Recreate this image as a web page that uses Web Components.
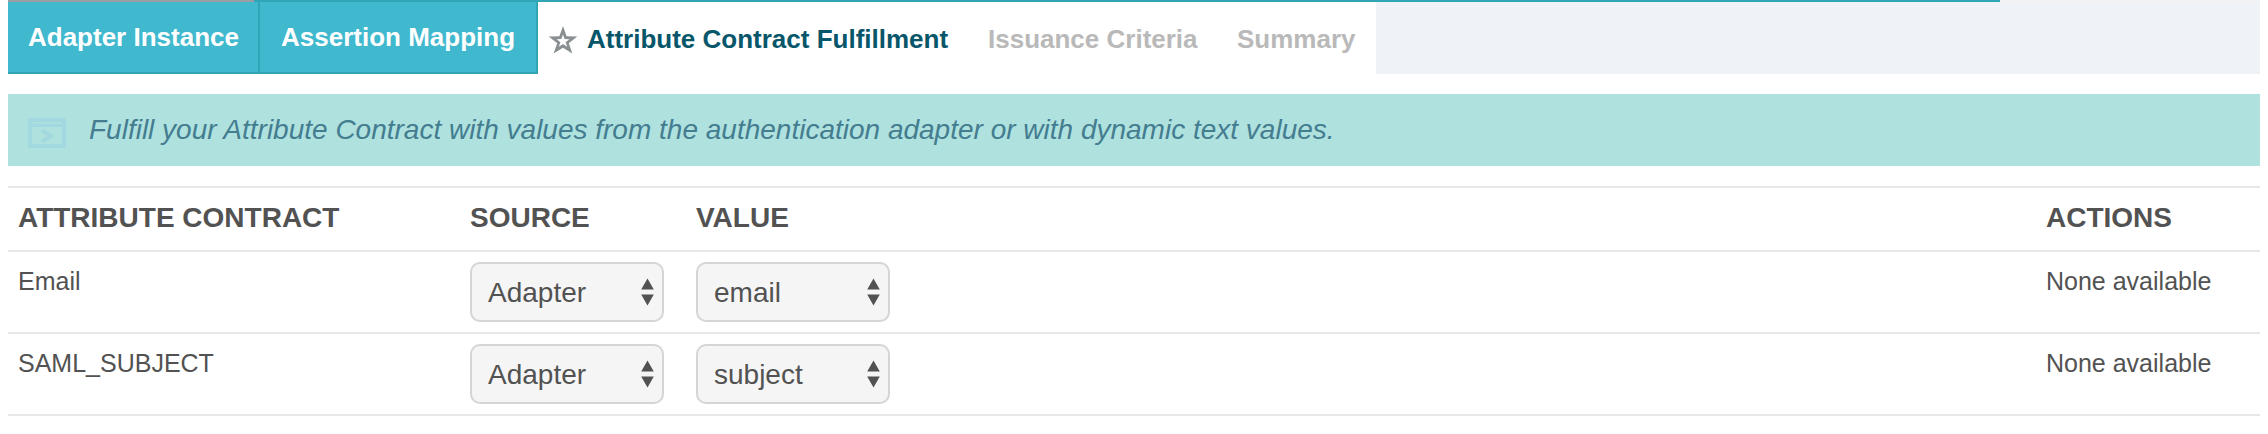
<!DOCTYPE html>
<html lang="en"><head><meta charset="utf-8"><title>Attribute Contract Fulfillment</title>
<style>body{margin:0;background:#fff;font-family:"Liberation Sans",Arial,sans-serif;color:#525252;width:2268px;height:434px;overflow:hidden}</style></head><body>
<contract-page></contract-page>
<script>
function define(name, html){
  customElements.define(name, class extends HTMLElement{
    constructor(){super();this.attachShadow({mode:'open'}).innerHTML=html;}
  });
}
define('step-progress',`<style>:host{display:flex;height:2px;background:#f3f3f3}.a{width:246px;background:#9c9ea1}.b{width:1746px;background:#30a5b8}</style><div class="a"></div><div class="b"></div>`);
define('step-tab',`<style>:host{display:flex;box-sizing:border-box;height:72px;padding:0 20px;font-size:26px;font-weight:bold;line-height:30px;white-space:nowrap;background:#fff;color:#b9b9b9;padding-top:22px}
:host([done]){background:#40b8ce;color:#fff;border-right:2px solid #30a5b8;border-bottom:2px solid #30a5b8;padding-top:20px}
:host([active]){color:#08566a}
svg{display:none;flex:none;width:30px;height:30px;margin:1px 9px 0 -10px}:host([active]) svg{display:block}</style>
<svg viewBox="0 0 30 30"><path fill-rule="evenodd" d="M15 1L18.6 11.2L29.3 11.6L20.8 18.2L24.4 28.6L15 22.7L5.6 28.6L9.2 18.2L0.7 11.6L11.4 11.2ZM15 9.5L13.4 14L8.6 14.2L12.4 17.2L10.8 21.8L15 19.1L19.2 21.8L17.6 17.2L21.4 14.2L16.6 14Z" fill="#8a9091"/></svg><slot></slot>`);
define('step-bar',`<style>:host{display:flex;height:72px;background:#eff3f8}</style><slot></slot>`);
define('info-banner',`<style>:host{display:flex;box-sizing:border-box;height:72px;margin-top:20px;padding:0 20px;background:#afe1df;color:#437d8f;font-size:28px;line-height:32px;font-style:italic;white-space:nowrap}
svg{width:38px;height:30px;margin:24px 23px 0 0;flex:none}.t{padding-top:20px}</style>
<svg viewBox="0 0 38 30"><g fill="none" stroke="#a2d8df"><rect x="2" y="2" width="34" height="26" rx="1" stroke-width="4"/><path d="M3 7H35" stroke-width="4"/><path d="M14 12.5L23 18L14 23.5" stroke-width="3.6"/></g><path d="M13 5H34" stroke="#addfe1" stroke-width="2.5"/><path d="M4 5h2M8 5h2" stroke="#addfe1" stroke-width="2"/></svg><div class="t"><slot></slot></div>`);
define('contract-row',`<style>:host{display:grid;grid-template-columns:452px 226px 1fr 214px;box-sizing:border-box;height:82px;border-bottom:2px solid #e7e7e7;padding:10px 0 0 10px;font-size:25px;line-height:30px;white-space:nowrap}
:host([head]){height:66px;border-top:2px solid #e7e7e7;margin-top:20px;font-size:28px;font-weight:bold;line-height:32px;padding-top:14px}
.c{padding-top:4px}:host([head]) .c{padding-top:0}</style>
<div class="c"><slot name="name"></slot></div><slot name="source"></slot><slot name="value"></slot><div class="c"><slot name="actions"></slot></div>`);
define('select-box',`<style>:host{display:flex;justify-content:space-between;box-sizing:border-box;width:194px;height:60px;border:2px solid #d5d5d5;border-radius:10px;background:#f5f5f5;font-size:28px;line-height:32px;padding:13px 7px 0 16px}
svg{width:14px;height:28px;margin-top:1px}</style><span><slot></slot></span><svg viewBox="0 0 14 28"><path d="M6.5 .5L12.8 11.5H.2ZM6.5 27.5L.2 16.5H12.8Z" fill="#525252"/></svg>`);
define('contract-page',`<style>:host{display:block;width:2252px;margin-left:8px}.t1{width:252px}.t2{width:278px;padding-left:21px}.t3{width:430px}.t4{width:249px}.t5{width:159px}</style>
<step-progress></step-progress>
<step-bar><step-tab class="t1" done>Adapter Instance</step-tab><step-tab class="t2" done>Assertion Mapping</step-tab><step-tab class="t3" active>Attribute Contract Fulfillment</step-tab><step-tab class="t4">Issuance Criteria</step-tab><step-tab class="t5">Summary</step-tab></step-bar>
<info-banner>Fulfill your Attribute Contract with values from the authentication adapter or with dynamic text values.</info-banner>
<contract-row head><span slot="name">ATTRIBUTE CONTRACT</span><span slot="source">SOURCE</span><span slot="value">VALUE</span><span slot="actions">ACTIONS</span></contract-row>
<contract-row><span slot="name">Email</span><select-box slot="source">Adapter</select-box><select-box slot="value">email</select-box><span slot="actions">None available</span></contract-row>
<contract-row><span slot="name">SAML_SUBJECT</span><select-box slot="source">Adapter</select-box><select-box slot="value">subject</select-box><span slot="actions">None available</span></contract-row>`);
</script></body></html>
